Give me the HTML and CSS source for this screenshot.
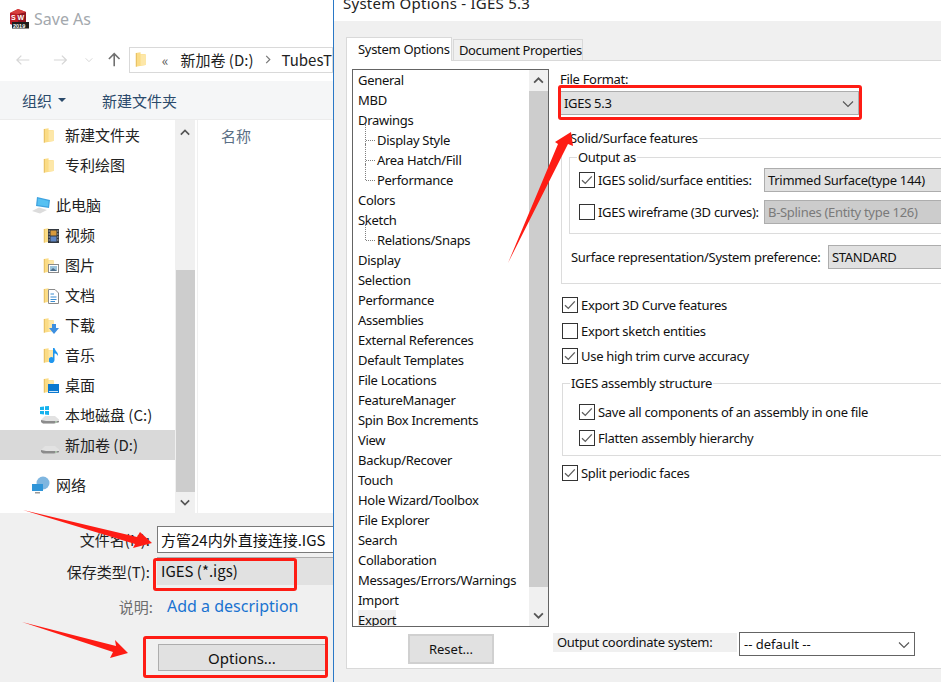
FILE: index.html
```html
<!DOCTYPE html>
<html lang="zh">
<head>
<meta charset="utf-8">
<title>Save As</title>
<link rel="stylesheet" href="styles.css">
</head>
<body>
<svg class="defs" width="0" height="0" aria-hidden="true">
  <defs>
    <symbol id="folder" viewBox="0 0 14 18">
      <path d="M1 1.5 6.5 0.5V2.5L12.5 3V15.5L1 17.5Z" fill="#fbdc86"/>
      <path d="M1 1.5V17.5L2 17.3V1.4Z" fill="#e2b95a"/>
      <path d="M6.5 3 12.5 3.5V15.5L6.5 16Z" fill="#fde7a8"/>
    </symbol>
    <symbol id="drive" viewBox="0 0 20 10">
      <path d="M1 6 5 2H15L19 5.5V8L14 9.5H3L1 8Z" fill="#e2e2e2"/>
      <path d="M1 6 6 7H19V8.3L14 9.5H3L1 8Z" fill="#8c8c8c"/>
      <path d="M15 7.5h2v1h-2z" fill="#c8f0c8"/>
    </symbol>
    <symbol id="check" viewBox="0 0 16 16">
      <path d="M3 8.2 6.3 11.4 12.8 4.4" fill="none" stroke="#5e5e5e" stroke-width="1.3"/>
    </symbol>
    <symbol id="chev" viewBox="0 0 12 8">
      <path d="M1 1.5 6 6.5 11 1.5" fill="none" stroke="#555" stroke-width="1.1"/>
    </symbol>
  </defs>
</svg>

<section class="win win-save">
  <header class="save-title">
    <svg class="logo" viewBox="0 0 20 20" width="20" height="20">
      <path d="M1 4 9 0 17 3V14L9 18 1 15Z" fill="#bd1c26"/>
      <path d="M9 5 17 3V14L9 18Z" fill="#8f1420"/>
      <path d="M1 4 9 0 17 3 9 5Z" fill="#d8403f"/>
      <text x="2" y="11" class="logo-sw">S W</text>
      <rect x="3" y="13" width="17" height="6.5" fill="#1d1d1d"/>
      <text x="4" y="18.5" class="logo-yr">2019</text>
    </svg>
    <span class="save-name">Save As</span>
  </header>

  <nav class="save-nav">
    <svg class="nav-ic" viewBox="0 0 16 12" width="16" height="12"><path d="M15 6H1M6 1 1 6 6 11" fill="none" stroke="#d6d6d6" stroke-width="1.4"/></svg>
    <svg class="nav-ic nav-fwd" viewBox="0 0 16 12" width="16" height="12"><path d="M1 6H15M10 1 15 6 10 11" fill="none" stroke="#d6d6d6" stroke-width="1.4"/></svg>
    <svg class="nav-ic nav-down" viewBox="0 0 12 8" width="9" height="6"><path d="M1 1.5 6 6.5 11 1.5" fill="none" stroke="#d6d6d6" stroke-width="1.5"/></svg>
    <svg class="nav-ic nav-up" viewBox="0 0 14 16" width="14" height="15"><path d="M7 15.5V1.5M1 7.5 7 1.5 13 7.5" fill="none" stroke="#707070" stroke-width="1.8"/></svg>
    <div class="addr">
      <svg class="addr-folder" width="12" height="17"><use href="#folder"/></svg>
      <span class="addr-mark">«</span>
      <span class="addr-text addr-first">新加卷 (D:)</span>
      <svg class="addr-chev" viewBox="0 0 6 10" width="6" height="9"><path d="M1 1 5 5 1 9" fill="none" stroke="#777" stroke-width="1.3"/></svg>
      <span class="addr-text">TubesT</span>
    </div>
  </nav>

  <div class="save-tools">
    <span class="tool">组织</span>
    <span class="caret"></span>
    <span class="tool tool-new">新建文件夹</span>
  </div>

  <div class="save-main">
    <ul class="tree">
      <li class="row"><svg class="ic" width="12" height="17"><use href="#folder"/></svg>新建文件夹</li>
      <li class="row"><svg class="ic" width="12" height="17"><use href="#folder"/></svg>专利绘图</li>
      <li class="row row-top gap">
        <svg class="ic-top" viewBox="0 0 20 18" width="20" height="18"><path d="M6 1 19 4 18 12 5 10Z" fill="#3fa3e0"/><path d="M7 2.500 17.500 5 17 10.500 6.500 9Z" fill="#56c1f2"/><path d="M1 15 8 11.500 16 14 9 17.500Z" fill="#dcdcdc"/></svg>此电脑</li>
      <li class="row"><span class="ic-wrap"><svg class="ic" width="12" height="17"><use href="#folder"/></svg><svg class="badge badge-film" viewBox="0 0 11 14" width="11" height="14"><rect width="11" height="14" fill="#33383f"/><rect x="2.500" y="1.500" width="6" height="5" fill="#d89a3c"/><rect x="2.500" y="7.500" width="6" height="5" fill="#5f86c4"/><path d="M.7 1.500h1v1h-1zM.7 4.500h1v1h-1zM.7 7.500h1v1h-1zM.7 10.500h1v1h-1zM9.300 1.500h1v1h-1zM9.300 4.500h1v1h-1zM9.300 7.500h1v1h-1zM9.300 10.500h1v1h-1z" fill="#e8e8e8"/></svg></span>视频</li>
      <li class="row"><span class="ic-wrap"><svg class="ic" width="12" height="17"><use href="#folder"/></svg><svg class="badge badge-low" viewBox="0 0 11 9" width="11" height="9"><rect x=".5" y=".5" width="10" height="8" fill="#fff" stroke="#8a8a8a"/><rect x="2" y="2" width="7" height="5" fill="#9cc4dc"/><path d="M2 7 5 4 9 7Z" fill="#4e6f8c"/></svg></span>图片</li>
      <li class="row"><span class="ic-wrap"><svg class="ic" width="12" height="17"><use href="#folder"/></svg><svg class="badge badge-film" viewBox="0 0 11 15" width="11" height="15"><path d="M.5.5H7L10.500 4V14.500H.5Z" fill="#fff" stroke="#8a8a8a"/><path d="M2.500 5H6M2.500 8H8.500M2.500 10.500H8.500M2.500 12.500H7" stroke="#3d8dd0"/></svg></span>文档</li>
      <li class="row"><span class="ic-wrap"><svg class="ic" width="12" height="17"><use href="#folder"/></svg><svg class="badge badge-low" viewBox="0 0 10 10" width="10" height="10"><path d="M3 0H7V4H10L5 10 0 4H3Z" fill="#3d8fe0"/></svg></span>下载</li>
      <li class="row"><span class="ic-wrap"><svg class="ic" width="12" height="17"><use href="#folder"/></svg><svg class="badge" viewBox="0 0 10 15" width="10" height="15"><path d="M4 0H5.500C6 3 9.500 4 9 8 8 6 6.500 5.500 5.500 5.500V12A3 3 0 1 1 4 9.500Z" fill="#1f96ee"/></svg></span>音乐</li>
      <li class="row"><span class="ic-wrap"><svg class="ic" width="12" height="17"><use href="#folder"/></svg><svg class="badge badge-low" viewBox="0 0 11 9" width="11" height="9"><rect width="11" height="9" fill="#0b79d0"/><rect x="1" y="7" width="9" height="1" fill="#cfe7fa"/></svg></span>桌面</li>
      <li class="row"><span class="ic-wrap"><svg class="ic-drive" width="20" height="10"><use href="#drive"/></svg><svg class="win-logo" viewBox="0 0 9 9" width="9" height="9"><path d="M0 1 4 .4V4H0ZM5 .3 9 0V4H5ZM0 5H4V8.500L0 8ZM5 5H9V9L5 8.600Z" fill="#17b3ee"/></svg></span>本地磁盘 (C:)</li>
      <li class="row row-sel"><span class="ic-wrap"><svg class="ic-drive" width="20" height="10"><use href="#drive"/></svg></span>新加卷 (D:)</li>
      <li class="row row-top gap">
        <svg class="ic-top" viewBox="0 0 20 18" width="20" height="18"><circle cx="12" cy="7" r="6.500" fill="#7fb6e0"/><path d="M1 8H12V15H1Z" fill="#2f95d8"/><path d="M4 16H9V17.500H4Z" fill="#999"/></svg>网络</li>
    </ul>
    <div class="scroll scroll-tree">
      <svg class="scroll-up" viewBox="0 0 12 8" width="10" height="7"><path d="M1 6.500 6 1.500 11 6.500" fill="none" stroke="#555" stroke-width="2"/></svg>
      <div class="scroll-thumb"></div>
      <svg class="scroll-down" viewBox="0 0 12 8" width="10" height="7"><path d="M1 1.500 6 6.500 11 1.500" fill="none" stroke="#555" stroke-width="2"/></svg>
    </div>
    <div class="files"><span class="col-name">名称</span></div>
  </div>

  <div class="save-foot">
    <div class="f-row f-name"><label class="f-label">文件名(N):</label><div class="f-input">方管24内外直接连接.IGS</div></div>
    <div class="f-row f-type"><label class="f-label">保存类型(T):</label><div class="f-select">IGES (*.igs)</div></div>
    <div class="f-row f-desc"><label class="f-label f-muted">说明:</label><a class="f-link">Add a description</a></div>
    <button class="f-btn">Options...</button>
  </div>
</section>

<section class="win win-opts">
  <header class="opts-title"><span>System Options - IGES 5.3</span></header>
  <div class="opts-body">
    <div class="tabs">
      <span class="tab tab-on">System Options</span>
      <span class="tab tab-doc">Document Properties</span>
    </div>
    <div class="panel">
      <div class="panel-main">
        <div class="listbox">
          <ul class="list">
            <li>General</li><li>MBD</li><li>Drawings</li>
            <li class="sub">Display Style</li><li class="sub">Area Hatch/Fill</li><li class="sub sub-end">Performance</li>
            <li>Colors</li><li>Sketch</li><li class="sub sub-end">Relations/Snaps</li>
            <li>Display</li><li>Selection</li><li>Performance</li><li>Assemblies</li>
            <li>External References</li><li>Default Templates</li><li>File Locations</li>
            <li>FeatureManager</li><li>Spin Box Increments</li><li>View</li>
            <li>Backup/Recover</li><li>Touch</li><li>Hole Wizard/Toolbox</li><li>File Explorer</li>
            <li>Search</li><li>Collaboration</li><li>Messages/Errors/Warnings</li><li>Import</li>
            <li><span class="list-cur">Export</span></li>
          </ul>
          <div class="scroll scroll-list">
            <svg class="scroll-up" viewBox="0 0 12 8" width="11" height="7"><path d="M1 6.500 6 1.500 11 6.500" fill="none" stroke="#555" stroke-width="2"/></svg>
            <div class="scroll-thumb"></div>
            <svg class="scroll-down" viewBox="0 0 12 8" width="11" height="7"><path d="M1 1.500 6 6.500 11 1.500" fill="none" stroke="#555" stroke-width="2"/></svg>
          </div>
        </div>
        <div class="form">
          <div class="ff-label">File Format:</div>
          <div class="combo combo-format">IGES 5.3<svg class="combo-chev" width="12" height="8"><use href="#chev"/></svg></div>

          <fieldset class="group group-solid">
            <legend>Solid/Surface features</legend>
            <fieldset class="group group-output">
              <legend>Output as</legend>
              <div class="opt-row"><span class="cb"><svg width="16" height="16"><use href="#check"/></svg></span><span class="opt-label">IGES solid/surface entities:</span><div class="combo combo-wide">Trimmed Surface(type 144)</div></div>
              <div class="opt-row opt-row2"><span class="cb"></span><span class="opt-label">IGES wireframe (3D curves):</span><div class="combo combo-wide combo-off">B-Splines (Entity type 126)</div></div>
            </fieldset>
            <div class="surf-row"><span class="surf-label">Surface representation/System preference:</span><div class="combo combo-surf">STANDARD</div></div>
          </fieldset>

          <div class="chk chk-a"><span class="cb"><svg width="16" height="16"><use href="#check"/></svg></span>Export 3D Curve features</div>
          <div class="chk chk-b"><span class="cb"></span>Export sketch entities</div>
          <div class="chk chk-c"><span class="cb"><svg width="16" height="16"><use href="#check"/></svg></span>Use high trim curve accuracy</div>

          <fieldset class="group group-asm">
            <legend>IGES assembly structure</legend>
            <div class="chk chk-d"><span class="cb"><svg width="16" height="16"><use href="#check"/></svg></span>Save all components of an assembly in one file</div>
            <div class="chk chk-e"><span class="cb"><svg width="16" height="16"><use href="#check"/></svg></span>Flatten assembly hierarchy</div>
          </fieldset>

          <div class="chk chk-f"><span class="cb"><svg width="16" height="16"><use href="#check"/></svg></span>Split periodic faces</div>
        </div>
      </div>
      <div class="panel-bottom">
        <button class="reset">Reset...</button>
        <span class="coord-label">Output coordinate system:</span>
        <div class="coord-select">-- default --<svg class="combo-chev" width="12" height="8"><use href="#chev"/></svg></div>
      </div>
    </div>
  </div>
</section>

<svg class="marks" viewBox="0 0 941 682" width="941" height="682" aria-hidden="true">
  <g fill="#fe1c14">
    <path d="M508 263 558 144 555 142 571 132 573 146 568 144Z"/>
    <path d="M23 510 137 537 140 532 152 543 133 548 135 544Z"/>
    <path d="M22 622 116 646 115 640 128 653 110 658 113 652Z"/>
  </g>
</svg>
<div class="mark-box box-format"></div>
<div class="mark-box box-type"></div>
<div class="mark-box box-options"></div>
</body>
</html>
```
FILE: styles.css
```css
* { box-sizing: border-box; }
html, body { margin: 0; padding: 0; height: 100%; overflow: hidden; background: #fff; }
body { position: relative; width: 941px; height: 682px; font-family: "Noto Sans", "Noto Sans CJK SC", sans-serif; color: #111; }
ul { list-style: none; margin: 0; padding: 0; }
.defs { position: absolute; }

.win { position: absolute; top: 0; height: 682px; overflow: hidden; display: flex; flex-direction: column; }

/* Save As window */
.win-save { left: 0; width: 334px; background: #fff; border-right: 1px solid #2a78c6; font-family: "Noto Sans CJK SC", "Noto Sans", sans-serif; font-size: 15px; }
.save-title { height: 38px; flex: none; display: flex; align-items: center; padding: 0 0 0 9px; }
.logo-sw { font: 700 7px "Liberation Sans", sans-serif; fill: #fff; }
.logo-yr { font: 700 5.500px "Liberation Sans", sans-serif; fill: #fff; }
.save-name { margin-left: 5px; color: #a3a8ad; font: 16px "Noto Sans", sans-serif; }
.save-nav { height: 43px; flex: none; display: flex; align-items: center; padding: 0 0 0 16px; position: relative; }
.nav-fwd { margin-left: 23px; }
.nav-down { margin-left: 18px; }
.nav-up { margin-left: 15px; }
.addr { margin-left: 8px; width: 210px; height: 26px; border: 1px solid #d9d9d9; display: flex; align-items: center; padding-left: 5px; white-space: nowrap; }
.addr-mark { margin-left: 15px; color: #555; font-size: 14px; line-height: 1; }
.addr-text { margin-left: 9px; color: #222; }
.addr-first { margin-left: 12px; }
.addr-chev { margin-left: 11px; margin-right: 2px; }
.save-tools { height: 39px; flex: none; background: #f5f6f7; display: flex; align-items: center; padding-left: 22px; border-bottom: 1px solid #ececec; color: #2b4a6b; }
.caret { margin-left: 6px; border: 4px solid transparent; border-top-color: #2b4a6b; border-bottom: 0; width: 0; height: 0; }
.tool-new { margin-left: 36px; }
.save-main { flex: none; height: 393px; display: flex; position: relative; }
.tree { width: 175px; flex: none; }
.row { height: 30px; display: flex; align-items: center; padding: 0 0 2px 43px; color: #222; white-space: nowrap; }
.row .ic { margin: 2px 10px 0 0; flex: none; }
.gap { margin-top: 10px; }
.row-top { padding-left: 31px; }
.ic-top { margin: 2px 5px 0 0; flex: none; }
.ic-wrap { width: 22px; height: 20px; margin-top: 2px; position: relative; display: block; flex: none; }
.ic-wrap .ic { position: absolute; left: 0; top: 2px; margin: 0; }
.badge { position: absolute; right: 6px; top: 3px; }
.badge-film { top: 4px; }
.badge-low { top: 9px; }
.ic-drive { position: absolute; left: -3px; top: 9px; }
.win-logo { position: absolute; left: -3px; top: 1px; }
.row-sel { background: #d9d9d9; }
.scroll { background: #f0f0f0; position: relative; flex: none; display: flex; flex-direction: column; align-items: center; }
.scroll-tree { width: 20px; padding-top: 9px; }
.scroll-tree .scroll-thumb { width: 19px; height: 222px; margin-top: 134px; background: #cdcdcd; }
.scroll-tree .scroll-down { margin-top: 7px; }
.files { flex: 1; border-left: 1px solid #f0f0f0; margin-left: 2px; padding: 5px 0 0 23px; }
.col-name { color: #5a6f85; }

.save-foot { flex: 1; background: #f0f0f0; position: relative; padding-top: 13px; }
.f-row { display: flex; align-items: center; white-space: nowrap; }
.f-label { width: 150px; flex: none; text-align: right; color: #222; }
.f-muted { color: #6d6d6d; width: 153px; }
.f-name { height: 27px; }
.f-input { margin-left: 7px; flex: 1; height: 27px; background: #fff; border: 1px solid #7a7a7a; border-right: 0; padding-left: 3px; line-height: 25px; overflow: hidden; }
.f-type { height: 28px; margin-top: 4px; }
.f-select { margin-left: 7px; flex: 1; height: 28px; background: #e1e1e1; border-top: 1px solid #adadad; padding-left: 4px; line-height: 25px; }
.f-desc { margin-top: 7px; height: 28px; }
.f-link { margin-left: 14px; color: #1a73d0; font: 16px "Noto Sans", sans-serif; }
.f-btn { display: block; margin: 24px 0 0 158px; width: 168px; height: 27px; background: #e1e1e1; border: 1px solid #adadad; font: 15px "Noto Sans", sans-serif; color: #111; padding: 0; }

/* System Options window */
.win-opts { left: 334px; width: 607px; background: #fff; font-size: 13px; letter-spacing: -0.3px; }
.opts-title { height: 21px; flex: none; padding-left: 9px; overflow: hidden; }
.opts-title span { display: block; margin-top: -7px; font-size: 15px; letter-spacing: 0.25px; line-height: 20px; color: #222; }
.opts-body { flex: 1; background: #f0f0f0; padding: 16px 0 0 12px; }
.tabs { display: flex; align-items: flex-end; height: 23px; padding-left: 1px; }
.tab { height: 21px; width: 130px; border: 1px solid #d9d9d9; border-bottom: 0; line-height: 20px; padding-left: 6px; white-space: nowrap; margin-left: 1px; }
.tab-doc { letter-spacing: -0.4px; padding-left: 5px; }
.tab-on { height: 24px; width: 106px; margin: 0 0 -1px -1px; background: #fff; padding-left: 11px; line-height: 22px; position: relative; z-index: 1; }
.panel { width: 800px; height: 609px; background: #fff; border: 1px solid #d9d9d9; padding: 8px 0 0 5px; }
.panel-main { display: flex; height: 558px; }
.listbox { width: 197px; height: 558px; border: 1px solid #646464; display: flex; overflow: hidden; flex: none; background: #fff; }
.list { flex: 1; min-width: 0; padding-left: 5px; }
.list li { height: 20px; line-height: 20px; white-space: nowrap; position: relative; }
.list .sub { padding-left: 19px; }
.list .sub::before { content: ""; position: absolute; left: 7px; top: -6px; width: 1px; height: 26px; border-left: 1px dotted #808080; }
.list .sub::after { content: ""; position: absolute; left: 8px; top: 10px; width: 9px; border-top: 1px dotted #808080; }
.list .sub-end::before { height: 16px; }
.list-cur { display: inline-block; background: #f0f0f0; }
.scroll-list { width: 19px; padding-top: 7px; }
.scroll-list .scroll-thumb { width: 19px; height: 496px; margin-top: 7px; background: #cdcdcd; }
.scroll-list .scroll-down { margin-top: 25px; }

.form { width: 560px; padding-left: 7px; margin-left: 4px; flex: none; }
.ff-label { height: 16px; line-height: 16px; margin-top: 2px; }
.combo { height: 24px; background: #e1e1e1; border: 1px solid #adadad; line-height: 22px; padding-left: 3px; position: relative; white-space: nowrap; }
.combo-format { width: 299px; margin-top: 4px; }
.combo-chev { position: absolute; right: 4px; top: 8px; }
.group { border: 1px solid #dcdcdc; margin: 0; min-width: 0; }
.group legend { padding: 0 1px; height: 16px; line-height: 16px; }
.group-solid { margin: 15px 0 0 1px; padding: 3px 0 14px 7px; }
.group-output { padding: 3px 0 9px 9px; }
.group-output > legend { margin-left: -2px; }
.opt-row { height: 24px; display: flex; align-items: center; }
.opt-row2 { margin-top: 8px; }
.cb { width: 16px; height: 16px; border: 1px solid #333; background: #fff; flex: none; display: block; }
.cb svg { display: block; margin: -1px; }
.opt-label { margin-left: 3px; width: 166px; flex: none; white-space: nowrap; }
.combo-wide { width: 300px; }
.combo-off { background: #ccc; color: #7a7a7a; }
.surf-row { height: 24px; margin-top: 11px; padding-left: 2px; display: flex; align-items: center; }
.surf-label { width: 257px; flex: none; white-space: nowrap; }
.combo-surf { width: 300px; }
.chk { height: 20px; display: flex; align-items: center; white-space: nowrap; gap: 3px; }
.chk-a { margin: 11px 0 0 2px; }
.chk-b { margin: 6px 0 0 2px; }
.chk-c { margin: 5px 0 0 2px; }
.group-asm { margin: 9px 0 0 2px; padding: 0 0 7px 16px; }
.group-asm > legend { margin-left: -9px; }
.chk-d { margin-top: 11px; }
.chk-e { margin-top: 6px; }
.chk-f { margin: 7px 0 0 2px; }
.panel-bottom { display: flex; align-items: flex-start; position: relative; padding-top: 5px; }
.reset { margin: 2px 0 0 56px; width: 86px; height: 30px; background: #e1e1e1; border: 2px solid #d0d0d0; font: 13px "Noto Sans", sans-serif; color: #111; padding: 0; flex: none; }
.coord-label { margin: 1px 0 0 59px; width: 184px; height: 19px; background: #f0f0f0; line-height: 18px; padding-left: 4px; flex: none; white-space: nowrap; }
.coord-select { margin-left: 2px; width: 176px; height: 24px; border: 1px solid #646464; line-height: 22px; padding-left: 4px; position: relative; flex: none; letter-spacing: 0; }

/* annotations */
.marks { position: absolute; left: 0; top: 0; pointer-events: none; }
.mark-box { position: absolute; border: 3px solid #fe1c14; border-radius: 3px; }
.box-format { left: 558px; top: 85px; width: 304px; height: 35px; }
.box-type { left: 153px; top: 558px; width: 144px; height: 33px; }
.box-options { left: 143px; top: 636px; width: 185px; height: 42px; }
```
